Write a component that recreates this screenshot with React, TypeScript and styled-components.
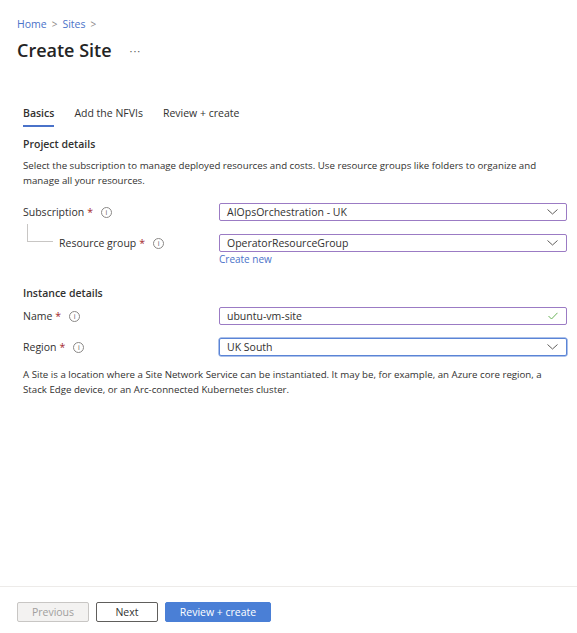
import React from "react";
import styled, { createGlobalStyle } from "styled-components";

const GlobalStyle = createGlobalStyle`
  html, body {
    margin: 0;
    padding: 0;
    background: #ffffff;
  }
  body {
    font-family: "Open Sans", "Noto Sans", sans-serif;
    color: #323130;
  }
`;

const Page = styled.div`
  width: 577px;
  height: 633px;
  display: flex;
  flex-direction: column;
  background: #fff;
`;

const Header = styled.div`
  padding: 16px 17px 0 17px;
`;

const Breadcrumb = styled.div`
  display: flex;
  align-items: center;
  gap: 5px;
  font-size: 10.5px;
  color: #4a72c9;
  height: 16px;
`;

const Chevron = styled.span`
  color: #8a8886;
  font-size: 10px;
`;

const TitleRow = styled.div`
  display: flex;
  align-items: center;
  gap: 18px;
  margin-top: 6px;
`;

const Title = styled.h1`
  margin: 0;
  font-size: 18px;
  font-weight: 600;
  color: #242424;
`;

const More = styled.span`
  font-size: 11px;
  color: #605e5c;
  letter-spacing: 1px;
`;

const Body = styled.div`
  flex: 1;
  padding: 0 10px 0 23px;
`;

const Tabs = styled.div`
  display: flex;
  gap: 20px;
  margin-top: 44px;
`;

const Tab = styled.div<{ $active?: boolean }>`
  font-size: 10.5px;
  font-weight: ${(p) => (p.$active ? 600 : 400)};
  color: #323130;
  padding-bottom: 5px;
  border-bottom: 2px solid ${(p) => (p.$active ? "#4a72c9" : "transparent")};
`;

const SectionTitle = styled.div`
  font-size: 10.5px;
  font-weight: 600;
  color: #323130;
  margin-top: 10px;
`;

const Paragraph = styled.p`
  font-size: 9.7px;
  line-height: 14.5px;
  margin: 8px 0 0 0;
  color: #323130;
`;

const Row = styled.div`
  display: grid;
  grid-template-columns: 196px 348px;
  align-items: center;
  margin-top: 13px;
  position: relative;
`;

const Label = styled.div<{ $indent?: number }>`
  display: flex;
  align-items: center;
  font-size: 10.5px;
  color: #323130;
  padding-left: ${(p) => p.$indent ?? 0}px;
`;

const Star = styled.span`
  color: #a4262c;
  margin-left: 3px;
`;

const Info = styled.span`
  display: inline-flex;
  align-items: center;
  justify-content: center;
  width: 9px;
  height: 9px;
  border: 1px solid #8a8886;
  border-radius: 50%;
  font-size: 7px;
  color: #605e5c;
  margin-left: 8px;
  line-height: 1;
`;

const Connector = styled.div`
  position: absolute;
  left: 4px;
  top: -10px;
  width: 25px;
  height: 17px;
  border-left: 1px solid #c8c6c4;
  border-bottom: 1px solid #c8c6c4;
`;

const Field = styled.div<{ $focused?: boolean }>`
  height: 18px;
  box-sizing: border-box;
  border: 1px solid ${(p) => (p.$focused ? "#5a84d6" : "#9b7bc4")};
  box-shadow: ${(p) => (p.$focused ? "0 0 0 0.5px #5a84d6" : "none")};
  border-radius: 2px;
  display: flex;
  align-items: center;
  justify-content: space-between;
  padding: 0 8px 0 7px;
  font-size: 10.5px;
  color: #323130;
`;

const FieldWrap = styled.div`
  display: flex;
  flex-direction: column;
`;

const Link = styled.span`
  color: #4a72c9;
  font-size: 10px;
  margin-top: 0;
`;

const Footer = styled.div`
  box-sizing: border-box;
  border-top: 1px solid #edebe9;
  height: 47px;
  flex-shrink: 0;
  display: flex;
  align-items: flex-start;
  gap: 7px;
  padding: 15px 17px 0 17px;
`;

const Button = styled.button<{ $variant?: "primary" | "disabled" | "default" }>`
  height: 20px;
  box-sizing: border-box;
  font-family: inherit;
  font-size: 10.5px;
  border-radius: 2px;
  padding: 0;
  width: ${(p) => (p.$variant === "primary" ? "106px" : p.$variant === "disabled" ? "72px" : "62px")};
  border: 1px solid
    ${(p) => (p.$variant === "primary" ? "#4a7fd6" : p.$variant === "disabled" ? "#c8c6c4" : "#605e5c")};
  background: ${(p) => (p.$variant === "primary" ? "#4a7fd6" : p.$variant === "disabled" ? "#f3f2f1" : "#fff")};
  color: ${(p) => (p.$variant === "primary" ? "#fff" : p.$variant === "disabled" ? "#a19f9d" : "#323130")};
`;

const ChevronDown = () => (
  <svg width="11" height="6" viewBox="0 0 11 6">
    <path d="M0.5 0.5 L5.5 5 L10.5 0.5" fill="none" stroke="#605e5c" strokeWidth="1" />
  </svg>
);

const Check = () => (
  <svg width="10" height="8" viewBox="0 0 10 8">
    <path d="M0.5 4 L3.5 7 L9.5 0.8" fill="none" stroke="#6bb35a" strokeWidth="1" />
  </svg>
);

const App: React.FC = () => (
  <Page>
    <GlobalStyle />
    <Header>
      <Breadcrumb>
        <span>Home</span>
        <Chevron>&gt;</Chevron>
        <span>Sites</span>
        <Chevron>&gt;</Chevron>
      </Breadcrumb>
      <TitleRow>
        <Title>Create Site</Title>
        <More>···</More>
      </TitleRow>
    </Header>
    <Body>
      <Tabs>
        <Tab $active>Basics</Tab>
        <Tab>Add the NFVIs</Tab>
        <Tab>Review + create</Tab>
      </Tabs>
      <SectionTitle>Project details</SectionTitle>
      <Paragraph>
        Select the subscription to manage deployed resources and costs. Use resource groups like folders to organize and
        manage all your resources.
      </Paragraph>
      <Row style={{ marginTop: 15 }}>
        <Label>
          Subscription<Star>*</Star>
          <Info>i</Info>
        </Label>
        <Field>
          AIOpsOrchestration - UK
          <ChevronDown />
        </Field>
      </Row>
      <Row style={{ alignItems: "start" }}>
        <Connector />
        <Label $indent={36} style={{ height: 18 }}>
          Resource group<Star>*</Star>
          <Info>i</Info>
        </Label>
        <FieldWrap>
          <Field>
            OperatorResourceGroup
            <ChevronDown />
          </Field>
          <Link>Create new</Link>
        </FieldWrap>
      </Row>
      <SectionTitle style={{ marginTop: 20 }}>Instance details</SectionTitle>
      <Row style={{ marginTop: 7 }}>
        <Label>
          Name<Star>*</Star>
          <Info>i</Info>
        </Label>
        <Field>
          ubuntu-vm-site
          <Check />
        </Field>
      </Row>
      <Row>
        <Label>
          Region<Star>*</Star>
          <Info>i</Info>
        </Label>
        <Field $focused>
          UK South
          <ChevronDown />
        </Field>
      </Row>
      <Paragraph style={{ marginTop: 12 }}>
        A Site is a location where a Site Network Service can be instantiated. It may be, for example, an Azure core
        region, a Stack Edge device, or an Arc-connected Kubernetes cluster.
      </Paragraph>
    </Body>
    <Footer>
      <Button $variant="disabled">Previous</Button>
      <Button $variant="default">Next</Button>
      <Button $variant="primary">Review + create</Button>
    </Footer>
  </Page>
);

export default App;
